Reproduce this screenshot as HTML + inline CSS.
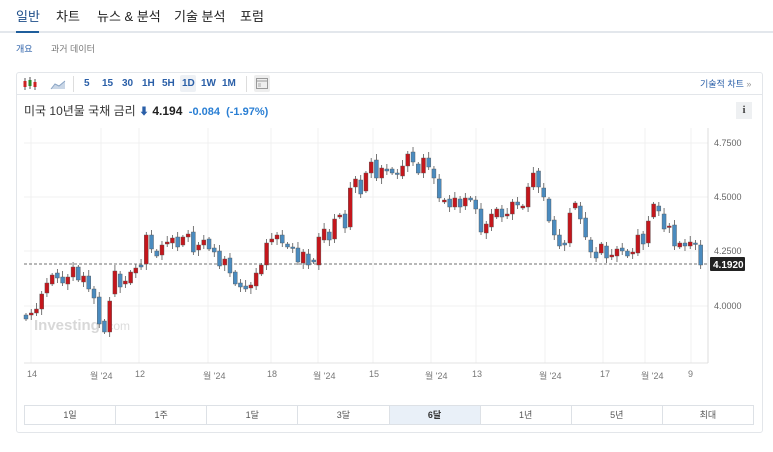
<!DOCTYPE html>
<html><head><meta charset="utf-8"><style>
*{margin:0;padding:0;box-sizing:border-box}
body{width:773px;height:452px;background:#fff;font-family:"Liberation Sans","Noto Sans CJK KR",sans-serif;position:relative;overflow:hidden;color:#333}
.a{position:absolute;white-space:nowrap}
.tab{font-size:13px;top:6px;color:#222}
.tb{font-size:10px;font-weight:bold;color:#2a5fa8;top:78px}
.xl{font-size:9px;color:#777;top:369px}
.yl{font-size:9px;color:#666;left:714px}
.rng{position:absolute;top:405px;left:24px;width:730px;height:20px;display:flex;border:1px solid #dde1e6}
.rng div{flex:1;border-right:1px solid #dde1e6;font-size:9px;color:#555;text-align:center;line-height:18px}
.rng div:last-child{border-right:none}
</style></head><body>
<div class="a tab" style="left:16px;color:#1f4f8a">일반</div>
<div class="a tab" style="left:56px">차트</div>
<div class="a tab" style="left:97px">뉴스 &amp; 분석</div>
<div class="a tab" style="left:174px">기술 분석</div>
<div class="a tab" style="left:240px">포럼</div>
<div class="a" style="left:0;top:31px;width:773px;height:2px;background:#e3e7ec"></div>
<div class="a" style="left:16px;top:31px;width:23px;height:2px;background:#1f5e9c"></div>
<div class="a" style="left:16px;top:42px;font-size:9px;color:#2a5fa8">개요</div>
<div class="a" style="left:51px;top:42px;font-size:9px;color:#777">과거 데이터</div>

<div class="a" style="left:16px;top:72px;width:747px;height:361px;border:1px solid #e3e6ea;border-radius:3px"></div>
<div class="a" style="left:17px;top:94px;width:745px;height:1px;background:#e3e6ea"></div>
<svg class="a" style="left:22px;top:76px" width="16" height="16"><g stroke="#555" stroke-width="1"><line x1="3" y1="2" x2="3" y2="14"/><line x1="8" y1="1" x2="8" y2="13"/><line x1="13" y1="3" x2="13" y2="14"/></g><rect x="1.5" y="5" width="3" height="6" fill="#c22"/><rect x="6.5" y="4" width="3" height="6" fill="#2a8a2a"/><rect x="11.5" y="6" width="3" height="5" fill="#c22"/></svg>
<svg class="a" style="left:50px;top:78px" width="16" height="12"><path d="M1 11 L5 6 L9 8 L15 3 L15 11 Z" fill="#c9d6e6"/><path d="M1 11 L5 6 L9 8 L15 3" stroke="#8aa4c4" fill="none"/></svg>
<div class="a" style="left:73px;top:76px;width:1px;height:16px;background:#ddd"></div>
<div class="a tb" style="left:84px">5</div>
<div class="a tb" style="left:102px">15</div>
<div class="a tb" style="left:122px">30</div>
<div class="a tb" style="left:142px">1H</div>
<div class="a tb" style="left:162px">5H</div>
<div class="a" style="left:180px;top:75px;width:16px;height:17px;background:#eef1f5;border-radius:2px"></div>
<div class="a tb" style="left:182px">1D</div>
<div class="a tb" style="left:201px">1W</div>
<div class="a tb" style="left:222px">1M</div>
<div class="a" style="left:246px;top:76px;width:1px;height:16px;background:#ddd"></div>
<div class="a" style="left:254px;top:75px;width:16px;height:17px;background:#eee;border-radius:2px"></div>
<svg class="a" style="left:256px;top:78px" width="12" height="11"><rect x="0.5" y="0.5" width="11" height="10" fill="none" stroke="#999"/><line x1="1" y1="3" x2="11" y2="3" stroke="#999"/><line x1="2" y1="6" x2="5" y2="6" stroke="#aaa"/><line x1="2" y1="8" x2="5" y2="8" stroke="#aaa"/></svg>
<div class="a" style="left:700px;top:77px;font-size:9px;color:#2a5fa8">기술적 차트 <span style="color:#999">»</span></div>

<div class="a" style="left:24px;top:102px;font-size:12px;color:#333">미국 10년물 국채 금리 <span style="color:#2a5fa8;font-size:10px">⬇</span> <b style="color:#222;font-size:12px">4.194</b> <span style="color:#2a7fd4;font-weight:bold;font-size:11px">&nbsp;-0.084&nbsp; (-1.97%)</span></div>
<div class="a" style="left:736px;top:102px;width:16px;height:17px;background:#eef0f2;font:bold 11px 'Liberation Serif',serif;color:#444;text-align:center;line-height:17px">i</div>

<svg class="a" style="left:0;top:0" width="773" height="452" id="ch">
<g stroke="#f0f0f0" stroke-width="1">
<line x1="24" y1="143" x2="708" y2="143"/><line x1="24" y1="197" x2="708" y2="197"/><line x1="24" y1="251" x2="708" y2="251"/><line x1="24" y1="306" x2="708" y2="306"/>
<line x1="31" y1="128" x2="31" y2="363"/><line x1="101" y1="128" x2="101" y2="363"/><line x1="139" y1="128" x2="139" y2="363"/><line x1="208" y1="128" x2="208" y2="363"/><line x1="271" y1="128" x2="271" y2="363"/><line x1="318" y1="128" x2="318" y2="363"/><line x1="373" y1="128" x2="373" y2="363"/><line x1="431" y1="128" x2="431" y2="363"/><line x1="476" y1="128" x2="476" y2="363"/><line x1="545" y1="128" x2="545" y2="363"/><line x1="603" y1="128" x2="603" y2="363"/><line x1="645" y1="128" x2="645" y2="363"/><line x1="691" y1="128" x2="691" y2="363"/>
</g>
<line x1="24" y1="363" x2="708" y2="363" stroke="#e3e3e3"/>
<line x1="708" y1="128" x2="708" y2="363" stroke="#ddd"/>
<text x="34" y="330" font-family="Liberation Sans,sans-serif" font-size="15" font-weight="bold" fill="#d8d8d8">Investing</text><text x="104" y="330" font-family="Liberation Sans,sans-serif" font-size="12" fill="#dcdcdc">.com</text>
<line x1="24" y1="264" x2="708" y2="264" stroke="#444" stroke-dasharray="3,2" stroke-width="0.8"/>
<g id="cs"></g>
<rect x="710" y="257" width="35" height="14" fill="#222" rx="1"/>
<text x="713" y="268" font-family="Liberation Sans,sans-serif" font-size="10" fill="#fff" font-weight="bold">4.1920</text>
</svg>
<div class="a yl" style="top:138px">4.7500</div>
<div class="a yl" style="top:192px">4.5000</div>
<div class="a yl" style="top:246px">4.2500</div>
<div class="a yl" style="top:301px">4.0000</div>

<div class="a xl" style="left:27px">14</div>
<div class="a xl" style="left:90px">월 '24</div>
<div class="a xl" style="left:135px">12</div>
<div class="a xl" style="left:203px">월 '24</div>
<div class="a xl" style="left:267px">18</div>
<div class="a xl" style="left:313px">월 '24</div>
<div class="a xl" style="left:369px">15</div>
<div class="a xl" style="left:425px">월 '24</div>
<div class="a xl" style="left:472px">13</div>
<div class="a xl" style="left:539px">월 '24</div>
<div class="a xl" style="left:600px">17</div>
<div class="a xl" style="left:641px">월 '24</div>
<div class="a xl" style="left:688px">9</div>

<div class="rng"><div>1일</div><div>1주</div><div>1달</div><div>3달</div><div style="background:#e9f0f8;color:#333;font-weight:bold">6달</div><div>1년</div><div>5년</div><div>최대</div></div>

<script>
var d=[[315,319,'b'],[313,315,'r'],[309,313,'r'],[294,309,'r'],[283,293,'r'],[275,284,'r'],[273,278,'b'],[277,283,'b'],[277,284,'r'],[267,277,'r'],[267,280,'b'],[276,282,'r'],[276,289,'b'],[289,298,'b'],[297,324,'b'],[321,332,'b'],[301,332,'r'],[271,294,'r'],[274,287,'b'],[281,284,'r'],[272,283,'r'],[268,273,'r'],[265,267,'b'],[235,264,'r'],[235,249,'b'],[251,256,'b'],[245,255,'r'],[242,244,'r'],[238,243,'r'],[237,247,'b'],[237,245,'r'],[234,237,'r'],[232,252,'b'],[245,250,'r'],[240,245,'r'],[239,249,'b'],[248,252,'b'],[251,266,'b'],[259,265,'r'],[258,273,'b'],[272,284,'b'],[283,287,'b'],[286,289,'b'],[285,288,'r'],[273,286,'r'],[265,274,'r'],[243,265,'r'],[239,242,'r'],[235,239,'r'],[235,243,'b'],[244,247,'b'],[247,248,'b'],[248,262,'b'],[252,263,'r'],[254,265,'b'],[260,262,'b'],[237,265,'r'],[229,240,'r'],[232,240,'b'],[219,239,'r'],[215,217,'r'],[214,228,'b'],[188,227,'r'],[179,187,'r'],[180,194,'b'],[173,191,'r'],[162,173,'r'],[160,178,'b'],[168,178,'r'],[169,171,'b'],[169,173,'b'],[173,174,'b'],[166,176,'r'],[154,166,'r'],[152,162,'b'],[164,173,'b'],[158,173,'r'],[158,167,'b'],[169,178,'b'],[179,198,'b'],[200,202,'r'],[199,207,'b'],[198,207,'r'],[199,207,'b'],[198,206,'r'],[198,200,'b'],[200,209,'b'],[209,232,'b'],[224,233,'r'],[214,227,'r'],[209,217,'r'],[209,217,'b'],[214,216,'r'],[202,214,'r'],[202,205,'b'],[206,208,'r'],[187,207,'r'],[173,187,'r'],[171,187,'b'],[188,197,'b'],[199,221,'b'],[220,235,'b'],[235,246,'b'],[243,245,'b'],[213,243,'r'],[203,208,'r'],[206,219,'b'],[218,237,'b'],[240,252,'b'],[252,258,'b'],[244,253,'r'],[246,258,'b'],[255,257,'r'],[249,256,'r'],[248,251,'b'],[251,256,'b'],[252,254,'r'],[235,253,'r'],[234,244,'b'],[221,243,'r'],[204,217,'r'],[206,211,'b'],[214,229,'b'],[226,227,'r'],[225,246,'b'],[243,247,'r'],[243,246,'b'],[242,246,'r'],[243,244,'b'],[245,265,'b']];
var s='';for(var i=0;i<d.length;i++){var x=26+i*5.23,t=d[i][0],b=d[i][1];var w1=t-2-(i*7%5),w2=b+2+(i*3%5);
s+='<line x1="'+x+'" y1="'+w1+'" x2="'+x+'" y2="'+w2+'" stroke="#555" stroke-width="0.8"/>';
var c=d[i][2]=='r'?'#c4161c':'#4a8bbf';var h=Math.max(b-t,1.5);
s+='<rect x="'+(x-2)+'" y="'+t+'" width="4" height="'+h+'" fill="'+c+'" stroke="#555" stroke-width="0.4"/>';}
document.getElementById('cs').innerHTML=s;
</script>
</body></html>
